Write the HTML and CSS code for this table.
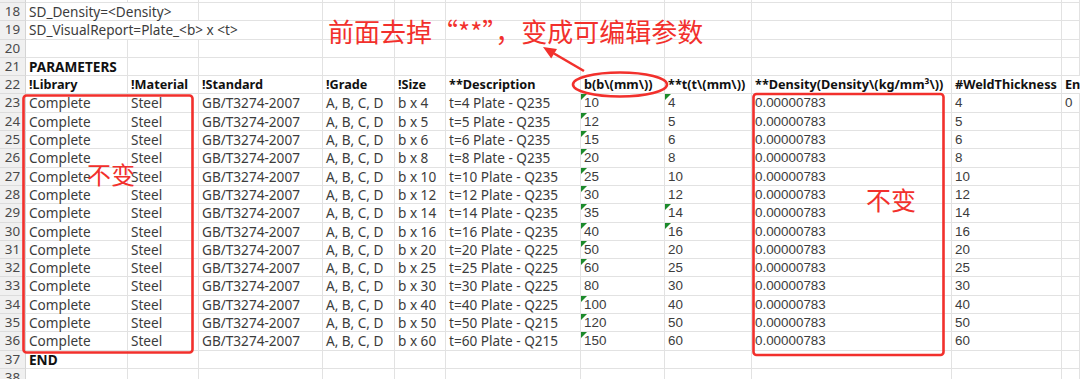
FILE: index.html
```html
<!DOCTYPE html>
<html lang="zh-CN">
<head>
    <meta charset="UTF-8">
    <title>PARAMETERS</title>
    <link rel="stylesheet" href="styles.css">
</head>
<body>
<div class="page">
    <div class="sheet">
        <div class="row top"><span class="rh"></span><span class="c"></span><span class="c"></span><span class="c"></span><span class="c"></span><span class="c"></span><span class="c"></span><span class="c"></span><span class="c"></span><span class="c"></span><span class="c"></span><span class="c"></span></div>
        <div class="row"><span class="rh">18</span><span class="c span2">SD_Density=&lt;Density&gt;</span><span class="c"></span><span class="c"></span><span class="c"></span><span class="c"></span><span class="c"></span><span class="c"></span><span class="c"></span><span class="c"></span><span class="c"></span></div>
        <div class="row"><span class="rh">19</span><span class="c span3">SD_VisualReport=Plate_&lt;b&gt; x &lt;t&gt;</span><span class="c"></span><span class="c"></span><span class="c"></span><span class="c"></span><span class="c"></span><span class="c"></span><span class="c"></span><span class="c"></span></div>
        <div class="row"><span class="rh">20</span><span class="c"></span><span class="c"></span><span class="c"></span><span class="c"></span><span class="c"></span><span class="c"></span><span class="c"></span><span class="c"></span><span class="c"></span><span class="c"></span><span class="c"></span></div>
        <div class="row"><span class="rh">21</span><span class="c b">PARAMETERS</span><span class="c"></span><span class="c"></span><span class="c"></span><span class="c"></span><span class="c"></span><span class="c"></span><span class="c"></span><span class="c"></span><span class="c"></span><span class="c"></span></div>
        <div class="row head"><span class="rh">22</span><span class="c">!Library</span><span class="c">!Material</span><span class="c">!Standard</span><span class="c">!Grade</span><span class="c">!Size</span><span class="c">**Description</span><span class="c">b(b\(mm\))</span><span class="c over">**t(t\(mm\))</span><span class="c">**Density(Density\(kg/mm³\))</span><span class="c">#WeldThickness</span><span class="c">EndDistance</span></div>

        <div class="row"><span class="rh">23</span><span class="c">Complete</span><span class="c">Steel</span><span class="c">GB/T3274-2007</span><span class="c">A, B, C, D</span><span class="c">b x 4</span><span class="c">t=4 Plate - Q235</span><span class="c num tag">10</span><span class="c num tag">4</span><span class="c num">0.00000783</span><span class="c num">4</span><span class="c num">0</span></div>
        <div class="row"><span class="rh">24</span><span class="c">Complete</span><span class="c">Steel</span><span class="c">GB/T3274-2007</span><span class="c">A, B, C, D</span><span class="c">b x 5</span><span class="c">t=5 Plate - Q235</span><span class="c num tag">12</span><span class="c num">5</span><span class="c num">0.00000783</span><span class="c num">5</span><span class="c"></span></div>
        <div class="row"><span class="rh">25</span><span class="c">Complete</span><span class="c">Steel</span><span class="c">GB/T3274-2007</span><span class="c">A, B, C, D</span><span class="c">b x 6</span><span class="c">t=6 Plate - Q235</span><span class="c num tag">15</span><span class="c num">6</span><span class="c num">0.00000783</span><span class="c num">6</span><span class="c"></span></div>
        <div class="row"><span class="rh">26</span><span class="c">Complete</span><span class="c">Steel</span><span class="c">GB/T3274-2007</span><span class="c">A, B, C, D</span><span class="c">b x 8</span><span class="c">t=8 Plate - Q235</span><span class="c num tag">20</span><span class="c num">8</span><span class="c num">0.00000783</span><span class="c num">8</span><span class="c"></span></div>
        <div class="row"><span class="rh">27</span><span class="c">Complete</span><span class="c">Steel</span><span class="c">GB/T3274-2007</span><span class="c">A, B, C, D</span><span class="c">b x 10</span><span class="c">t=10 Plate - Q235</span><span class="c num tag">25</span><span class="c num">10</span><span class="c num">0.00000783</span><span class="c num">10</span><span class="c"></span></div>
        <div class="row"><span class="rh">28</span><span class="c">Complete</span><span class="c">Steel</span><span class="c">GB/T3274-2007</span><span class="c">A, B, C, D</span><span class="c">b x 12</span><span class="c">t=12 Plate - Q235</span><span class="c num tag">30</span><span class="c num">12</span><span class="c num">0.00000783</span><span class="c num">12</span><span class="c"></span></div>
        <div class="row"><span class="rh">29</span><span class="c">Complete</span><span class="c">Steel</span><span class="c">GB/T3274-2007</span><span class="c">A, B, C, D</span><span class="c">b x 14</span><span class="c">t=14 Plate - Q235</span><span class="c num tag">35</span><span class="c num tag">14</span><span class="c num">0.00000783</span><span class="c num">14</span><span class="c"></span></div>
        <div class="row"><span class="rh">30</span><span class="c">Complete</span><span class="c">Steel</span><span class="c">GB/T3274-2007</span><span class="c">A, B, C, D</span><span class="c">b x 16</span><span class="c">t=16 Plate - Q235</span><span class="c num tag">40</span><span class="c num tag">16</span><span class="c num">0.00000783</span><span class="c num">16</span><span class="c"></span></div>
        <div class="row"><span class="rh">31</span><span class="c">Complete</span><span class="c">Steel</span><span class="c">GB/T3274-2007</span><span class="c">A, B, C, D</span><span class="c">b x 20</span><span class="c">t=20 Plate - Q225</span><span class="c num tag">50</span><span class="c num">20</span><span class="c num">0.00000783</span><span class="c num">20</span><span class="c"></span></div>
        <div class="row"><span class="rh">32</span><span class="c">Complete</span><span class="c">Steel</span><span class="c">GB/T3274-2007</span><span class="c">A, B, C, D</span><span class="c">b x 25</span><span class="c">t=25 Plate - Q225</span><span class="c num tag">60</span><span class="c num">25</span><span class="c num">0.00000783</span><span class="c num">25</span><span class="c"></span></div>
        <div class="row"><span class="rh">33</span><span class="c">Complete</span><span class="c">Steel</span><span class="c">GB/T3274-2007</span><span class="c">A, B, C, D</span><span class="c">b x 30</span><span class="c">t=30 Plate - Q225</span><span class="c num">80</span><span class="c num">30</span><span class="c num">0.00000783</span><span class="c num">30</span><span class="c"></span></div>
        <div class="row"><span class="rh">34</span><span class="c">Complete</span><span class="c">Steel</span><span class="c">GB/T3274-2007</span><span class="c">A, B, C, D</span><span class="c">b x 40</span><span class="c">t=40 Plate - Q225</span><span class="c num tag">100</span><span class="c num">40</span><span class="c num">0.00000783</span><span class="c num">40</span><span class="c"></span></div>
        <div class="row"><span class="rh">35</span><span class="c">Complete</span><span class="c">Steel</span><span class="c">GB/T3274-2007</span><span class="c">A, B, C, D</span><span class="c">b x 50</span><span class="c">t=50 Plate - Q215</span><span class="c num tag">120</span><span class="c num">50</span><span class="c num">0.00000783</span><span class="c num">50</span><span class="c"></span></div>
        <div class="row"><span class="rh">36</span><span class="c">Complete</span><span class="c">Steel</span><span class="c">GB/T3274-2007</span><span class="c">A, B, C, D</span><span class="c">b x 60</span><span class="c">t=60 Plate - Q215</span><span class="c num tag">150</span><span class="c num">60</span><span class="c num">0.00000783</span><span class="c num">60</span><span class="c"></span></div>

        <div class="row"><span class="rh">37</span><span class="c b">END</span><span class="c"></span><span class="c"></span><span class="c"></span><span class="c"></span><span class="c"></span><span class="c"></span><span class="c"></span><span class="c"></span><span class="c"></span><span class="c"></span></div>
        <div class="row"><span class="rh">38</span><span class="c"></span><span class="c"></span><span class="c"></span><span class="c"></span><span class="c"></span><span class="c"></span><span class="c"></span><span class="c"></span><span class="c"></span><span class="c"></span><span class="c"></span></div>
    </div>

    <!-- 批注 -->
    <svg class="marks" width="1080" height="379" viewBox="0 0 1080 379">
        <rect x="23.5" y="95.5" width="169" height="257" rx="3" />
        <rect x="753.5" y="94" width="190" height="261" rx="3" />
        <ellipse cx="620" cy="84.5" rx="47" ry="12" />
        <line x1="584" y1="71" x2="554" y2="53.5" />
        <polygon class="head" points="543,47 551.2,58.5 557,49.1" />
    </svg>
    <div class="note note-top">前面去掉“**”，变成可编辑参数</div>
    <div class="note note-left">不变</div>
    <div class="note note-right">不变</div>
</div>
</body>
</html>
```

FILE: styles.css
```css
body {
    margin: 0;
    background: #fff;
    font-family: "Noto Sans", "Noto Sans CJK SC", sans-serif;
    font-size: 13.6px;
    color: #3c3c3c;
    overflow: hidden;
}
.page {
    position: relative;
    width: 1080px;
    height: 379px;
    overflow: hidden;
}
.row {
    display: grid;
    grid-template-columns: 26px 102px 71px 124px 72px 51px 135px 84px 87px 200px 110px 1fr;
    height: 18.3px;
}
.row.top {
    height: 3px;
}
.rh {
    background: #f0f0f0;
    color: #4a4a4a;
    text-align: center;
    border-right: 1px solid #d4d4d4;
    border-bottom: 1px solid #dcdcdc;
    line-height: 17.3px;
    font-size: 13.4px;
}
.c {
    position: relative;
    padding-left: 3px;
    border-right: 1px solid #e2e2e2;
    border-bottom: 1px solid #e2e2e2;
    white-space: nowrap;
    line-height: 17.3px;
    overflow: visible;
}
.span2 {
    grid-column: span 2;
}
.span3 {
    grid-column: span 3;
}
.b,
.head .c {
    font-weight: bold;
    color: #111;
}
.head .c {
    font-size: 12.7px;
}
.head .over {
    overflow: hidden;
}
.num {
    font-family: "Liberation Sans", Arial, sans-serif;
    font-size: 13.4px;
}
.tag::before {
    content: "";
    position: absolute;
    left: 0;
    top: 0;
    border-top: 6px solid #1b8a2a;
    border-right: 6px solid transparent;
}

.marks {
    position: absolute;
    left: 0;
    top: 0;
    pointer-events: none;
}
.marks rect,
.marks ellipse,
.marks line {
    fill: none;
    stroke: #f2302c;
    stroke-width: 2.6;
}
.marks .head {
    fill: #f2302c;
}
.note {
    position: absolute;
    color: #f2302c;
    font-family: "Noto Sans CJK SC", sans-serif;
    line-height: 1;
    white-space: nowrap;
}
.note-top {
    left: 328px;
    top: 18px;
    font-size: 26px;
}
.note-left {
    left: 87px;
    top: 162px;
    font-size: 24px;
}
.note-right {
    left: 866px;
    top: 187px;
    font-size: 25px;
}
```
